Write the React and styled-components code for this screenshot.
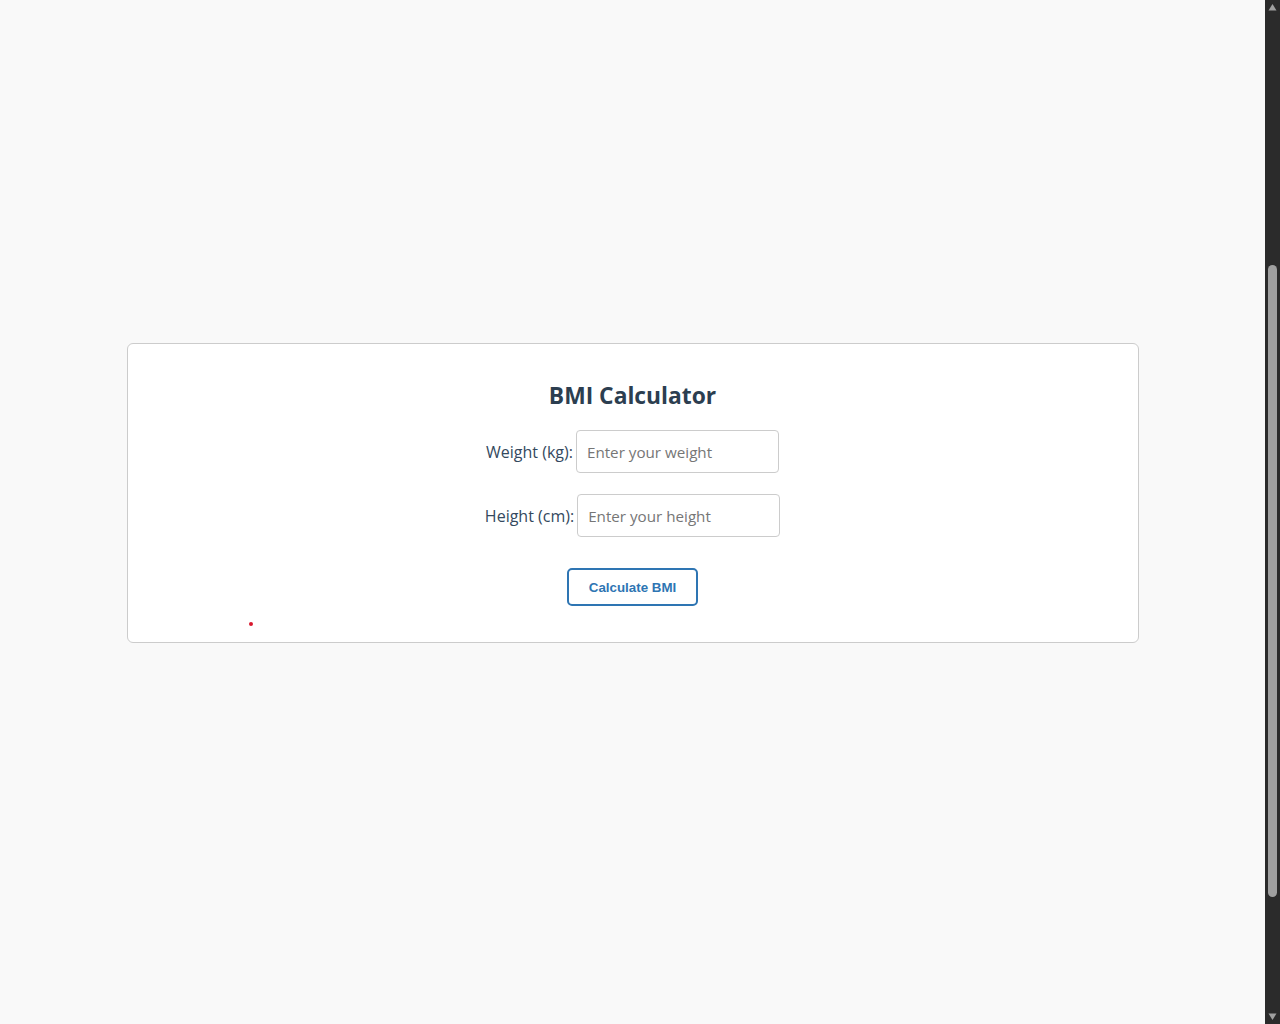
import React from "react";
import styled, { createGlobalStyle } from "styled-components";

const GlobalStyle = createGlobalStyle`
  html, body {
    margin: 0;
    height: 100%;
    overflow: hidden;
  }
  body {
    background: #f9f9f9;
    font-family: "Open Sans", "Noto Sans", sans-serif;
    color: #2c3e50;
  }
`;

const Page = styled.main`
  height: 100vh;
  box-sizing: border-box;
  padding: 343px 15px 0 0;
`;

const Card = styled.section`
  width: 80%;
  margin: 0 auto;
  box-sizing: border-box;
  height: 300px;
  background: #ffffff;
  border: 1px solid #cccccc;
  border-radius: 6px;
  padding: 36px 20px 0;
  display: flex;
  flex-direction: column;
  align-items: center;
`;

const Title = styled.h2`
  margin: 0 0 18px;
  font-size: 22.8px;
  line-height: 32px;
  font-weight: 700;
  color: #2c3e50;
`;

const Field = styled.div`
  display: flex;
  align-items: center;
  gap: 3px;
  margin-bottom: ${(p) => p.$mb}px;
`;

const Label = styled.label`
  font-size: 16px;
  color: #34495e;
`;

const Input = styled.input`
  box-sizing: border-box;
  width: 203px;
  height: 43px;
  padding: 0 10px;
  border: 1px solid #cccccc;
  border-radius: 4px;
  background: #ffffff;
  font-family: "Open Sans", "Noto Sans", sans-serif;
  font-size: 15.2px;
  color: #2c3e50;
  outline: none;
  &::placeholder {
    color: #767676;
  }
`;

const Button = styled.button`
  box-sizing: border-box;
  width: 131px;
  height: 38px;
  border: 2px solid #2e75b3;
  border-radius: 5px;
  background: #ffffff;
  color: #2e75b3;
  font-family: "Liberation Sans", Arial, sans-serif;
  font-size: 13.33px;
  font-weight: 700;
  cursor: pointer;
`;

const ErrorDot = styled.span`
  align-self: flex-start;
  width: 4px;
  height: 4px;
  margin: 16px 0 0 101px;
  border-radius: 50%;
  background: #d9182e;
`;

/* Window scrollbar chrome, drawn over the right edge of the viewport */
const ScrollTrack = styled.div`
  position: fixed;
  top: 0;
  right: 0;
  width: 15px;
  height: 100vh;
  background: #2b2b2b;
`;

const Arrow = styled.svg`
  position: absolute;
  left: 3px;
  ${(p) => (p.$down ? "bottom: 3px;" : "top: 3px;")}
  width: 9px;
  height: 8px;
`;

const Thumb = styled.div`
  position: absolute;
  left: 3px;
  top: 265px;
  width: 9px;
  height: 632px;
  border-radius: 5px;
  background: #a0a0a0;
`;

export default function App() {
  return (
    <>
      <GlobalStyle />
      <Page>
        <Card>
          <Title>BMI Calculator</Title>
          <Field $mb={21}>
            <Label htmlFor="weight">Weight (kg):</Label>
            <Input id="weight" type="number" placeholder="Enter your weight" />
          </Field>
          <Field $mb={31}>
            <Label htmlFor="height">Height (cm):</Label>
            <Input id="height" type="number" placeholder="Enter your height" />
          </Field>
          <Button type="button">Calculate BMI</Button>
          <ErrorDot />
        </Card>
      </Page>
      <ScrollTrack aria-hidden="true">
        <Arrow viewBox="0 0 9 8">
          <path d="M4.5 1 L8.5 7.5 L0.5 7.5 Z" fill="#a0a0a0" />
        </Arrow>
        <Thumb />
        <Arrow $down viewBox="0 0 9 8">
          <path d="M0.5 0.5 L8.5 0.5 L4.5 7 Z" fill="#a0a0a0" />
        </Arrow>
      </ScrollTrack>
    </>
  );
}
